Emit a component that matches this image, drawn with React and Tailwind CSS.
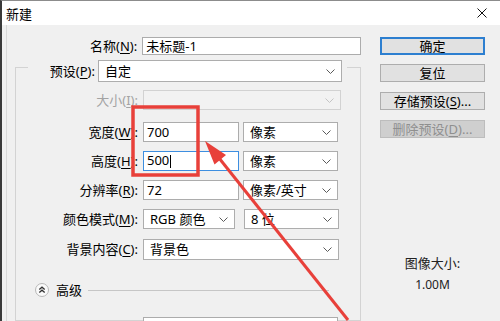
import React from "react";

function Chevron({ light }) {
  return (
    <svg width="9" height="5" viewBox="0 0 9 5" className="shrink-0">
      <polyline
        points="0.5,0.5 4.5,4.5 8.5,0.5"
        fill="none"
        stroke={light ? "#c4c4c4" : "#5a5a5a"}
        strokeWidth="1"
      />
    </svg>
  );
}

function Select({ className, children, disabled }) {
  return (
    <div
      className={
        "flex items-center justify-between pl-[6px] pr-[6px] border " +
        (disabled ? "bg-[#f2f2f2] border-[#d2d2d2] " : "bg-white border-[#adadad] ") +
        className
      }
    >
      <span className="leading-none whitespace-nowrap">{children}</span>
      <Chevron light={disabled} />
    </div>
  );
}

function Input({ className, children, focused }) {
  return (
    <div
      className={
        "flex items-center pl-[3px] border bg-white " +
        (focused ? "border-[#3d8ee0] " : "border-[#acacac] ") +
        className
      }
    >
      <span className="leading-none whitespace-nowrap">{children}</span>
    </div>
  );
}

function Label({ children, disabled }) {
  return (
    <div
      className={
        "w-[125px] pr-[3px] text-right whitespace-nowrap leading-none " +
        (disabled ? "text-[#a3a3a3]" : "text-black")
      }
    >
      {children}
    </div>
  );
}

function U({ children }) {
  return <span className="underline underline-offset-2">{children}</span>;
}

function Button({ className, children, variant }) {
  const v =
    variant === "default"
      ? "bg-[#e1e1e1] border-2 border-[#2d7fd0] text-black"
      : variant === "disabled"
      ? "bg-[#cfcfcf] border border-[#bdbdbd] text-[#8f8f8f]"
      : "bg-[#e1e1e1] border border-[#adadad] text-black";
  return (
    <div
      className={
        "w-[105px] h-[18px] flex items-center justify-center leading-none whitespace-nowrap " +
        v +
        " " +
        className
      }
    >
      {children}
    </div>
  );
}

export default function App() {
  return (
    <div className="relative w-[500px] h-[321px] overflow-hidden bg-[#f0f0f0] border-l-2 border-l-[#3a3a3a] border-t border-t-[#8c8c8c] text-[13px] text-black font-['Noto_Sans','Noto_Sans_CJK_SC',sans-serif]">
      {/* title bar */}
      <div className="h-[24px] bg-white flex items-center justify-between pl-[4px] pr-[13px]">
        <span className="leading-none text-[13px] font-['Noto_Sans_CJK_SC',sans-serif]">新建</span>
        <svg width="10" height="10" viewBox="0 0 10 10">
          <line x1="0.5" y1="0.5" x2="9.5" y2="9.5" stroke="#111" strokeWidth="1" />
          <line x1="9.5" y1="0.5" x2="0.5" y2="9.5" stroke="#111" strokeWidth="1" />
        </svg>
      </div>

      {/* body */}
      <div className="flex h-[296px] ml-[4px] border-l border-l-[#d9d9d9]">
        {/* left column */}
        <div className="w-[354px] shrink-0 flex flex-col">
          {/* name row */}
          <div className="mt-[12px] flex items-center h-[18px]">
            <div className="w-[134px] pr-[3px] text-right leading-none whitespace-nowrap">
              名称(<U>N</U>):
            </div>
            <Input className="ml-[2px] w-[220px] h-[18px]">未标题-1</Input>
          </div>

          {/* group box */}
          <fieldset className="ml-[8px] mt-[-3px] w-[346px] border border-[#d3d3d3] flex-1 min-h-0">
            <legend className="ml-[12px] pt-[8px] pr-[5px]">
              <div className="flex items-center h-[22px]">
                <div className="w-[68px] pr-[1px] text-right leading-none whitespace-nowrap">
                  预设(<U>P</U>):
                </div>
                <Select className="ml-[2px] w-[244px] h-[22px]">自定</Select>
              </div>
            </legend>

            <div className="flex flex-col">
              <div className="mt-[8px] flex items-center h-[20px]">
                <Label disabled>
                  大小(<U>I</U>):
                </Label>
                <Select disabled className="ml-[2px] w-[198px] h-[20px]">
                  {""}
                </Select>
              </div>

              <div className="mt-[12px] flex items-center h-[20px]">
                <Label>
                  宽度(<U>W</U>):
                </Label>
                <Input className="ml-[2px] w-[96px] h-[20px]">700</Input>
                <Select className="ml-[4px] w-[95px] h-[20px]">像素</Select>
              </div>

              <div className="mt-[9px] flex items-center h-[20px]">
                <Label>
                  高度(<U>H</U>):
                </Label>
                <Input focused className="ml-[2px] w-[96px] h-[20px]">
                  500<span className="inline-block w-px h-[13px] bg-black align-middle ml-px"></span>
                </Input>
                <Select className="ml-[4px] w-[95px] h-[20px]">像素</Select>
              </div>

              <div className="mt-[9px] flex items-center h-[20px]">
                <Label>
                  分辨率(<U>R</U>):
                </Label>
                <Input className="ml-[2px] w-[96px] h-[20px]">72</Input>
                <Select className="ml-[4px] w-[95px] h-[20px]">像素/英寸</Select>
              </div>

              <div className="mt-[9px] flex items-center h-[20px]">
                <Label>
                  颜色模式(<U>M</U>):
                </Label>
                <Select className="ml-[2px] w-[92px] h-[20px]">RGB 颜色</Select>
                <Select className="ml-[9px] w-[95px] h-[20px]">8 位</Select>
              </div>

              <div className="mt-[10px] flex items-center h-[21px]">
                <Label>
                  背景内容(<U>C</U>):
                </Label>
                <Select className="ml-[2px] w-[196px] h-[21px]">背景色</Select>
              </div>

              <div className="mt-[23px] ml-[19px] mr-[31px] flex items-center h-[14px]">
                <svg width="14" height="14" viewBox="0 0 14 14" className="shrink-0">
                  <circle cx="7" cy="7" r="6.5" fill="#fafafa" stroke="#b8b8b8" strokeWidth="1" />
                  <polyline points="4.3,6.6 7,4.2 9.7,6.6" fill="none" stroke="#333" strokeWidth="1.3" />
                  <polyline points="4.3,9.6 7,7.2 9.7,9.6" fill="none" stroke="#333" strokeWidth="1.3" />
                </svg>
                <span className="ml-[7px] leading-none whitespace-nowrap">高级</span>
                <div className="ml-[6px] flex-1 h-px bg-[#c6c6c6]"></div>
              </div>

              <div className="mt-[20px] ml-[127px] w-[195px] h-[20px] bg-white border border-[#acacac]"></div>
            </div>
          </fieldset>
        </div>

        {/* right column */}
        <div className="ml-[19px] flex flex-col">
          <Button variant="default" className="mt-[12px]">
            确定
          </Button>
          <Button className="mt-[9px]">复位</Button>
          <Button className="mt-[10px]">
            存储预设(<U>S</U>)...
          </Button>
          <Button variant="disabled" className="mt-[10px]">
            删除预设(<U>D</U>)...
          </Button>
          <div className="mt-[116px] w-[105px] flex flex-col items-center text-[#222]">
            <span className="leading-[18px]">图像大小:</span>
            <span className="leading-[18px] mt-[4px] text-[12px]">1.00M</span>
          </div>
        </div>
      </div>

      {/* annotation overlay */}
      <svg
        className="absolute left-[-2px] top-[-1px] pointer-events-none"
        width="500"
        height="321"
        viewBox="0 0 500 321"
      >
        <rect x="133" y="107" width="65" height="68" fill="none" stroke="#e8403a" strokeWidth="3.5" />
        <line x1="219" y1="158" x2="348" y2="320" stroke="#e8403a" strokeWidth="3" />
        <polygon points="205,141 214.5,164.5 226,155" fill="#e8403a" />
      </svg>
    </div>
  );
}
